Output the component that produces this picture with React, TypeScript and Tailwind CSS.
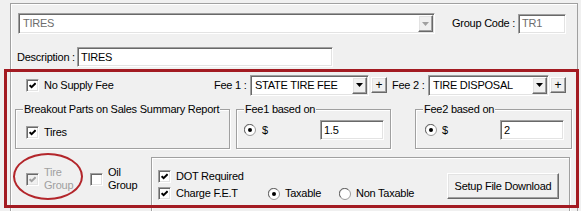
import React from "react";

// Classic Win32 3D edges
const sunken =
  "border border-t-[#a0a0a0] border-l-[#a0a0a0] border-b-white border-r-white shadow-[inset_1px_1px_0_#696969,inset_-1px_-1px_0_#e3e3e3]";
const raised =
  "border border-t-white border-l-white border-b-[#696969] border-r-[#696969] shadow-[inset_-1px_-1px_0_#a0a0a0,inset_1px_1px_0_#e3e3e3] bg-[#f0f0f0]";
const etched = "border border-[#a0a0a0] shadow-[inset_1px_1px_0_white,1px_1px_0_white]";

function Check({ disabled = false }: { disabled?: boolean }) {
  return (
    <span
      className={`flex h-[13px] w-[13px] shrink-0 items-center justify-center ${sunken} ${
        disabled ? "bg-[#f0f0f0]" : "bg-white"
      }`}
    >
      <svg width="7" height="7" viewBox="0 0 7 7">
        <path
          d="M0.6 3.2 L2.6 5.2 L6.6 1.2"
          stroke={disabled ? "#a0a0a0" : "#000"}
          strokeWidth="2"
          fill="none"
        />
      </svg>
    </span>
  );
}

function EmptyCheck() {
  return <span className={`block h-[13px] w-[13px] shrink-0 bg-white ${sunken}`} />;
}

function Radio({ on }: { on: boolean }) {
  return (
    <svg width="12" height="12" viewBox="0 0 12 12" className="shrink-0">
      <circle cx="6" cy="6" r="5.5" fill="#fff" stroke="#9a9a9a" />
      <path d="M1.8 9.2 A5 5 0 0 1 9.2 1.8" stroke="#6b6b6b" fill="none" />
      {on && <circle cx="6" cy="6" r="2" fill="#000" />}
    </svg>
  );
}

function Arrow({ grey = false }: { grey?: boolean }) {
  return (
    <span className={`flex h-[17px] w-[15px] shrink-0 items-center justify-center ${raised}`}>
      <svg width="7" height="4" viewBox="0 0 7 4">
        <polygon points="0,0 7,0 3.5,4" fill={grey ? "#a0a0a0" : "#000"} />
      </svg>
    </span>
  );
}

function Combo({ text, w, grey = false }: { text: string; w: string; grey?: boolean }) {
  return (
    <div className={`flex h-[21px] shrink-0 items-center bg-white p-[1px] ${sunken} ${w}`}>
      <span className={`flex-1 truncate pl-[3px] ${grey ? "text-[#6d6d6d]" : "text-black"}`}>{text}</span>
      <Arrow grey={grey} />
    </div>
  );
}

function Field({ text, w, grey = false }: { text: string; w: string; grey?: boolean }) {
  return (
    <div className={`flex h-[20px] shrink-0 items-center bg-white pl-[3px] ${sunken} ${w}`}>
      <span className={grey ? "text-[#6d6d6d]" : "text-black"}>{text}</span>
    </div>
  );
}

function PlusButton() {
  return (
    <button className={`flex h-[16px] w-[16px] items-center justify-center text-[12px] leading-none ${raised}`}>
      +
    </button>
  );
}

function Group({ label, w, children }: { label: string; w: string; children: React.ReactNode }) {
  return (
    <fieldset className={`h-[46px] shrink-0 ${etched} ${w}`}>
      <legend className="ml-[7px] bg-[#f0f0f0] px-[1px] leading-[13px]">{label}</legend>
      {children}
    </fieldset>
  );
}

export default function App() {
  return (
    <div className="relative h-[211px] w-[581px] overflow-hidden whitespace-nowrap bg-[#f0f0f0] font-['Liberation_Sans',Arial,sans-serif] text-[11px] leading-[13px] tracking-[-0.25px] text-black">
      <div className="ml-[10px] mt-[3px] h-[210px] w-[568px] border border-b-0 border-[#a0a0a0] shadow-[inset_1px_1px_0_white]">
        {/* group + code */}
        <div className="mt-[9px] flex items-center pl-[7px]">
          <Combo text="TIRES" w="w-[417px]" grey />
          <span className="ml-[17px] w-[66px]">Group Code :</span>
          <Field text="TR1" w="w-[48px]" grey />
        </div>

        {/* description */}
        <div className="mt-[13px] flex items-center pl-[6px]">
          <span className="w-[60px]">Description :</span>
          <Field text="TIRES" w="w-[256px]" />
        </div>

        {/* fees */}
        <div className="mt-[8px] flex h-[20px] items-center pl-[15px]">
          <div className="flex w-[188px] items-center gap-[5px]">
            <Check />
            <span>No Supply Fee</span>
          </div>
          <span className="w-[36px]">Fee 1 :</span>
          <Combo text="STATE TIRE FEE" w="w-[119px]" />
          <span className="ml-[2px]">
            <PlusButton />
          </span>
          <span className="ml-[5px] w-[36px]">Fee 2 :</span>
          <Combo text="TIRE DISPOSAL" w="w-[121px]" />
          <span className="ml-[1px]">
            <PlusButton />
          </span>
        </div>

        <div className="mt-[8px] flex pl-[4px]">
          <Group label="Breakout Parts on Sales Summary Report" w="w-[215px]">
            <div className="mt-[10px] flex items-center gap-[5px] pl-[10px]">
              <Check />
              <span>Tires</span>
            </div>
          </Group>
          <div className="ml-[6px]">
            <Group label="Fee1 based on" w="w-[155px]">
              <div className="mt-[4px] flex h-[20px] items-center pl-[7px] pr-[6px]">
                <Radio on />
                <span className="ml-[6px]">$</span>
                <Field text="1.5" w="ml-auto w-[64px]" />
              </div>
            </Group>
          </div>
          <div className="ml-[24px]">
            <Group label="Fee2 based on" w="w-[157px]">
              <div className="mt-[4px] flex h-[20px] items-center pl-[9px] pr-[7px]">
                <Radio on />
                <span className="ml-[5px]">$</span>
                <Field text="2" w="ml-auto w-[64px]" />
              </div>
            </Group>
          </div>
        </div>

        <div className="mt-[8px] flex pl-[4px]">
          <div className="flex h-[44px] w-[136px] shrink-0 items-center pl-[11px]">
            <div className="flex w-[64px] items-center gap-[5px]">
              <Check disabled />
              <span className="text-[#a0a0a0]">
                Tire
                <br />
                Group
              </span>
            </div>
            <div className="flex items-center gap-[5px]">
              <EmptyCheck />
              <span>
                Oil
                <br />
                Group
              </span>
            </div>
          </div>
          <div className={`flex h-[60px] w-[419px] shrink-0 ${etched}`}>
            <div className="flex flex-col gap-[4px] pl-[6px] pt-[12px]">
              <div className="flex h-[13px] items-center gap-[5px]">
                <Check />
                <span>DOT Required</span>
              </div>
              <div className="flex h-[13px] items-center">
                <div className="flex w-[110px] items-center gap-[5px]">
                  <Check />
                  <span>Charge F.E.T</span>
                </div>
                <div className="flex w-[71px] items-center gap-[5px]">
                  <Radio on />
                  <span>Taxable</span>
                </div>
                <div className="flex items-center gap-[5px]">
                  <Radio on={false} />
                  <span>Non Taxable</span>
                </div>
              </div>
            </div>
            <button className={`ml-auto mr-[10px] mt-[15px] h-[26px] w-[112px] ${raised}`}>
              Setup File Download
            </button>
          </div>
        </div>
      </div>

      {/* annotation overlays */}
      <div className="absolute left-[4px] top-[69px] h-[139px] w-[575px] border-[3px] border-[#a31b22]" />
      <div className="absolute left-[13px] top-[153px] h-[47px] w-[70px] rounded-[50%] border-2 border-[#b3262b]" />
    </div>
  );
}
